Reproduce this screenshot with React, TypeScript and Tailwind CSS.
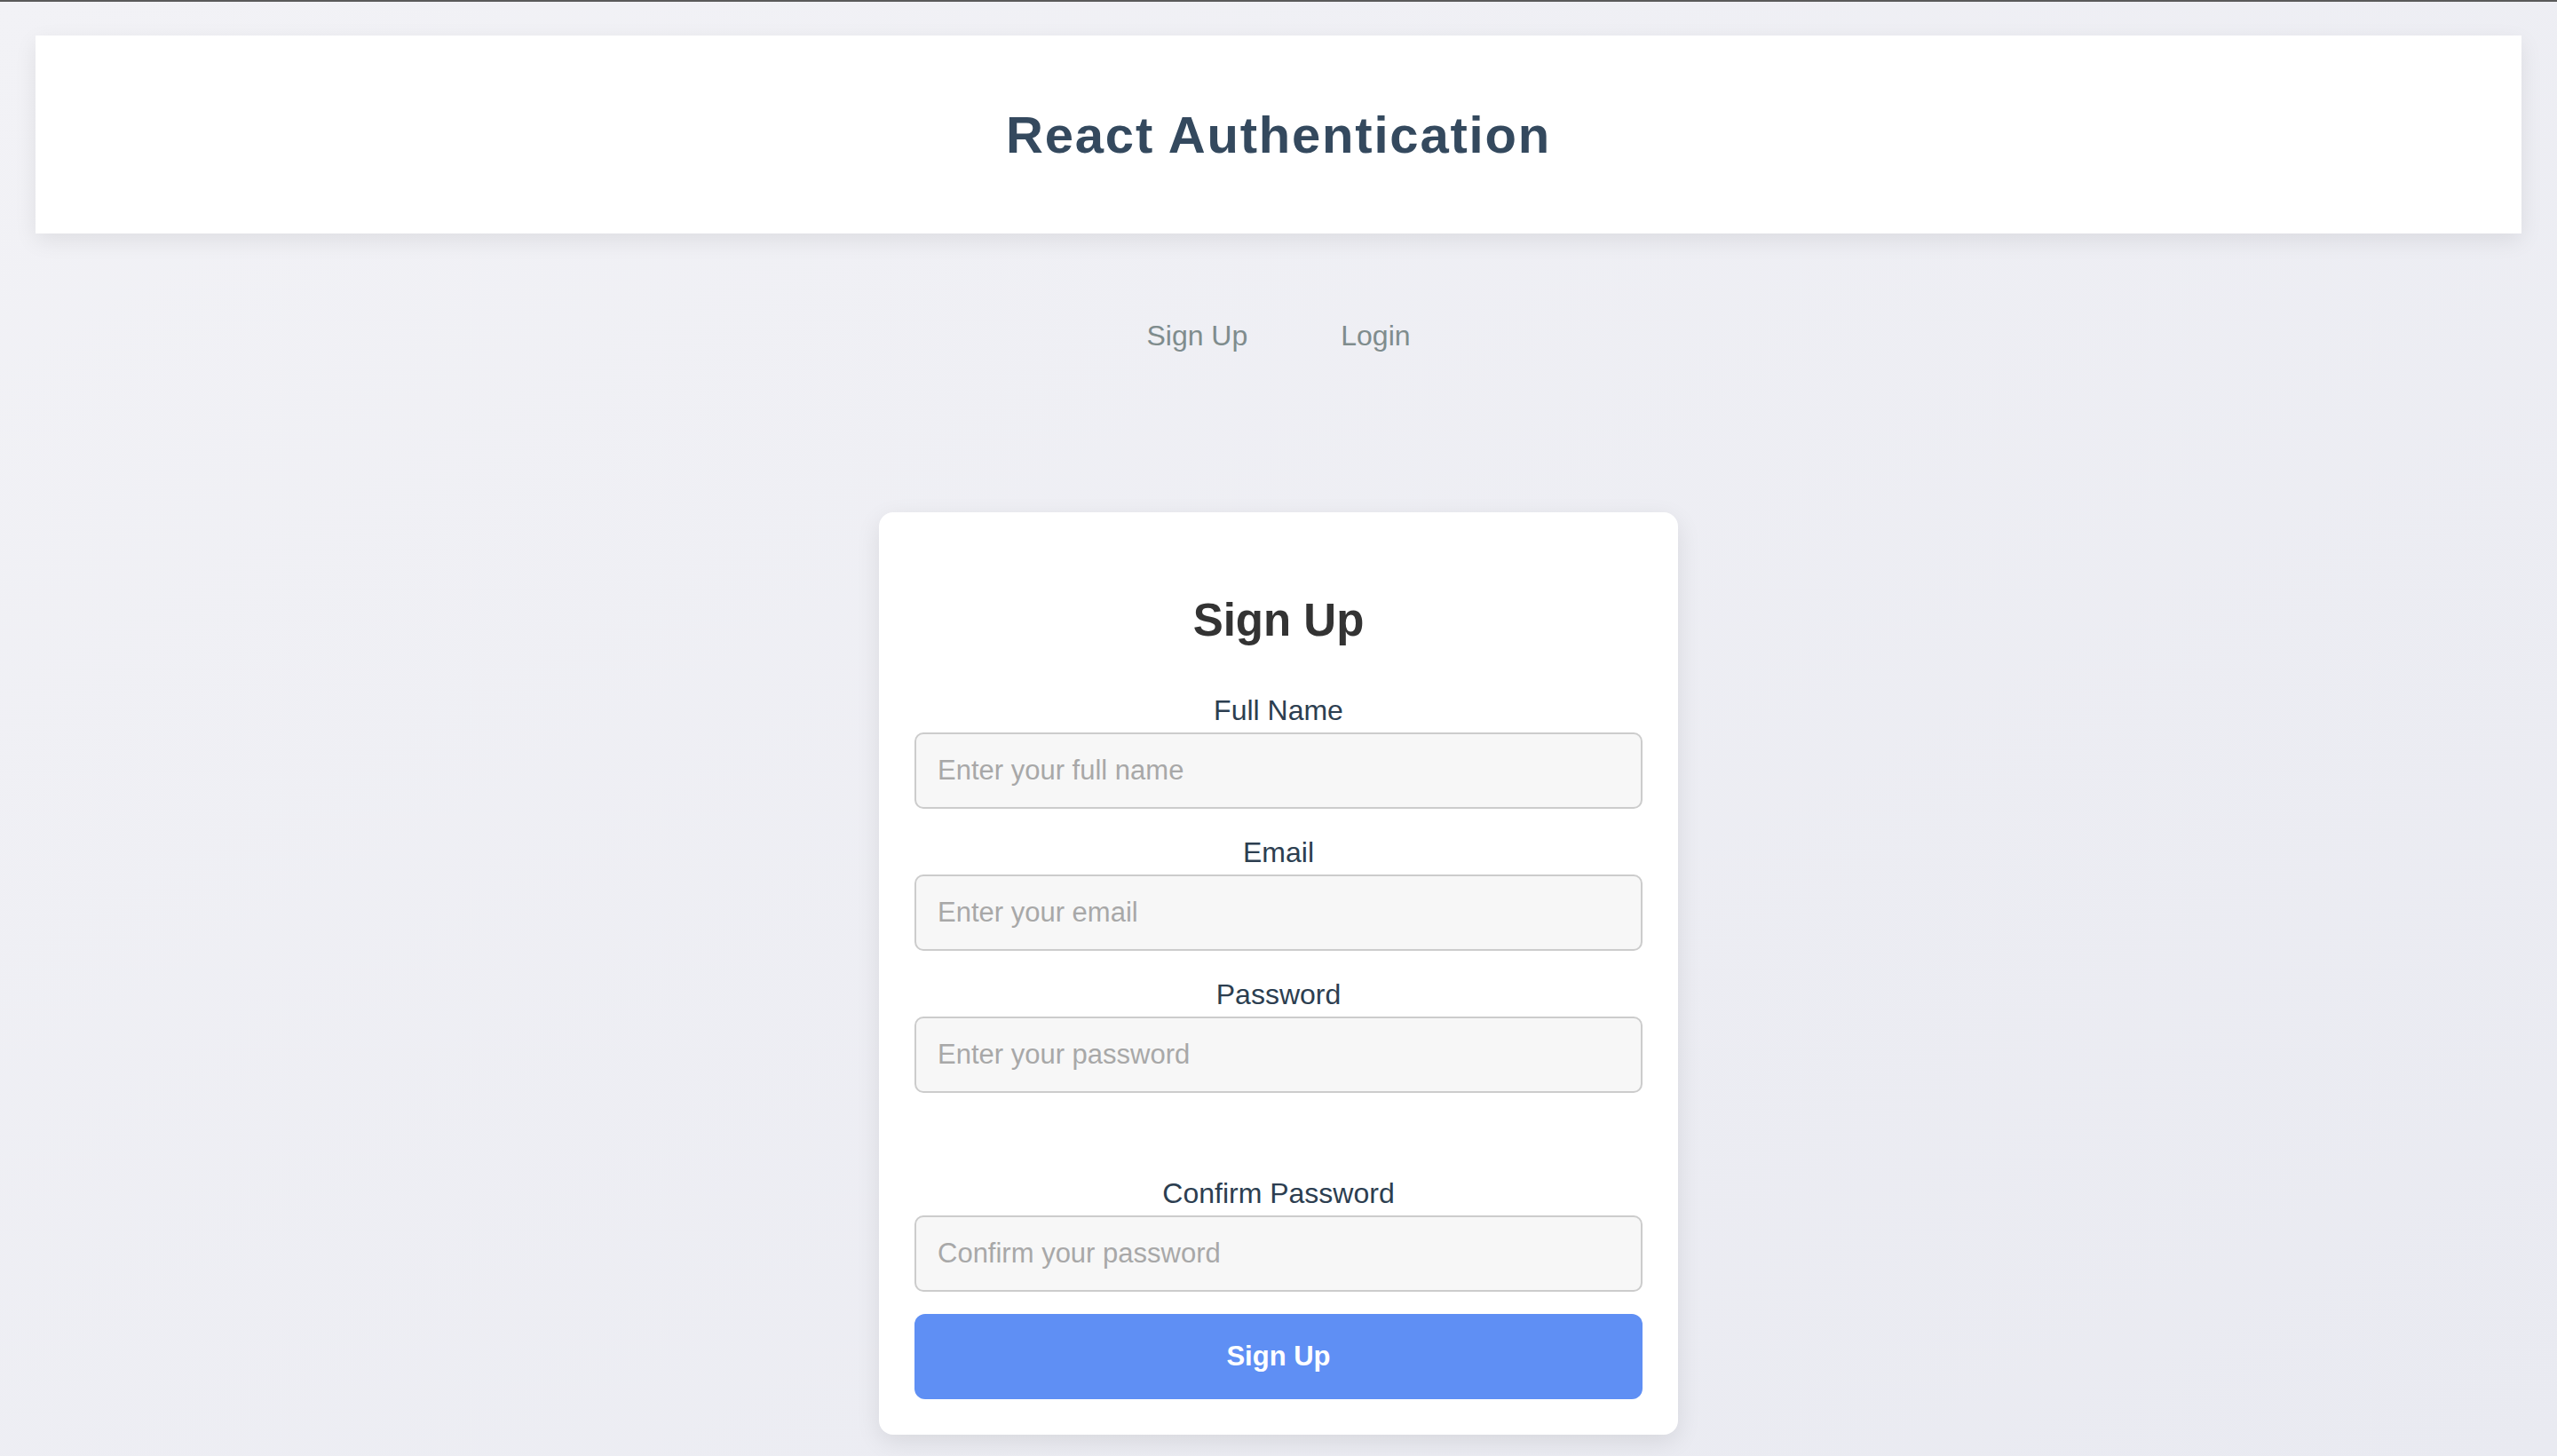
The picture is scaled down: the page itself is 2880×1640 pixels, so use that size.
import React from "react";

const font = { fontFamily: '"Liberation Sans", Arial, Helvetica, sans-serif' };

function Field({ label, placeholder, type }: { label: string; placeholder: string; type: string }) {
  return (
    <div className="mb-[31px] flex flex-col">
      <label className="mb-[7px] text-center text-[32px] leading-[36px] text-[#2c3e50]">{label}</label>
      <input
        type={type}
        placeholder={placeholder}
        className="h-[86px] w-full rounded-[10px] border-2 border-[#cccccc] bg-[#f7f7f7] px-[24px] text-[31px] text-[#333] outline-none placeholder:text-[#a8a8a8]"
        style={font}
      />
    </div>
  );
}

export default function App() {
  return (
    <div
      className="min-h-screen w-full bg-gradient-to-br from-[#f2f2f6] to-[#e9eaf1] pb-[24px]"
      style={font}
    >
      <div className="h-[2px] w-full bg-[#5a5a5a]" />
      <header className="mx-[40px] mt-[38px] flex h-[223px] items-center justify-center bg-white shadow-[0_8px_24px_rgba(0,0,0,0.08)]">
        <h1 className="text-[58px] font-bold leading-[66px] tracking-[1.8px] text-[#34495e]">React Authentication</h1>
      </header>
      <nav className="mt-[97px] flex justify-center gap-[105px] text-[32px] leading-[36px] text-[#7f8c8d]">
        <a href="#">Sign Up</a>
        <a href="#">Login</a>
      </nav>
      <main className="mx-auto mt-[181px] w-[900px] rounded-[16px] bg-white px-[40px] pb-[40px] pt-[40px] shadow-[0_8px_28px_rgba(0,0,0,0.09)]">
        <h2 className="mb-[54px] mt-[53px] text-center text-[51px] font-bold leading-[58px] text-[#333333]">Sign Up</h2>
        <form onSubmit={(e) => e.preventDefault()} className="flex flex-col">
          <Field label="Full Name" placeholder="Enter your full name" type="text" />
          <Field label="Email" placeholder="Enter your email" type="email" />
          <Field label="Password" placeholder="Enter your password" type="password" />
          <div className="h-[64px]" />
          <div className="flex flex-col">
            <label className="mb-[7px] text-center text-[32px] leading-[36px] text-[#2c3e50]">Confirm Password</label>
            <input
              type="password"
              placeholder="Confirm your password"
              className="h-[86px] w-full rounded-[10px] border-2 border-[#cccccc] bg-[#f7f7f7] px-[24px] text-[31px] text-[#333] outline-none placeholder:text-[#a8a8a8]"
              style={font}
            />
          </div>
          <button
            type="submit"
            className="mt-[25px] h-[96px] w-full rounded-[12px] bg-[#5f8ff4] text-[31px] font-bold text-white"
            style={font}
          >
            Sign Up
          </button>
        </form>
      </main>
    </div>
  );
}
